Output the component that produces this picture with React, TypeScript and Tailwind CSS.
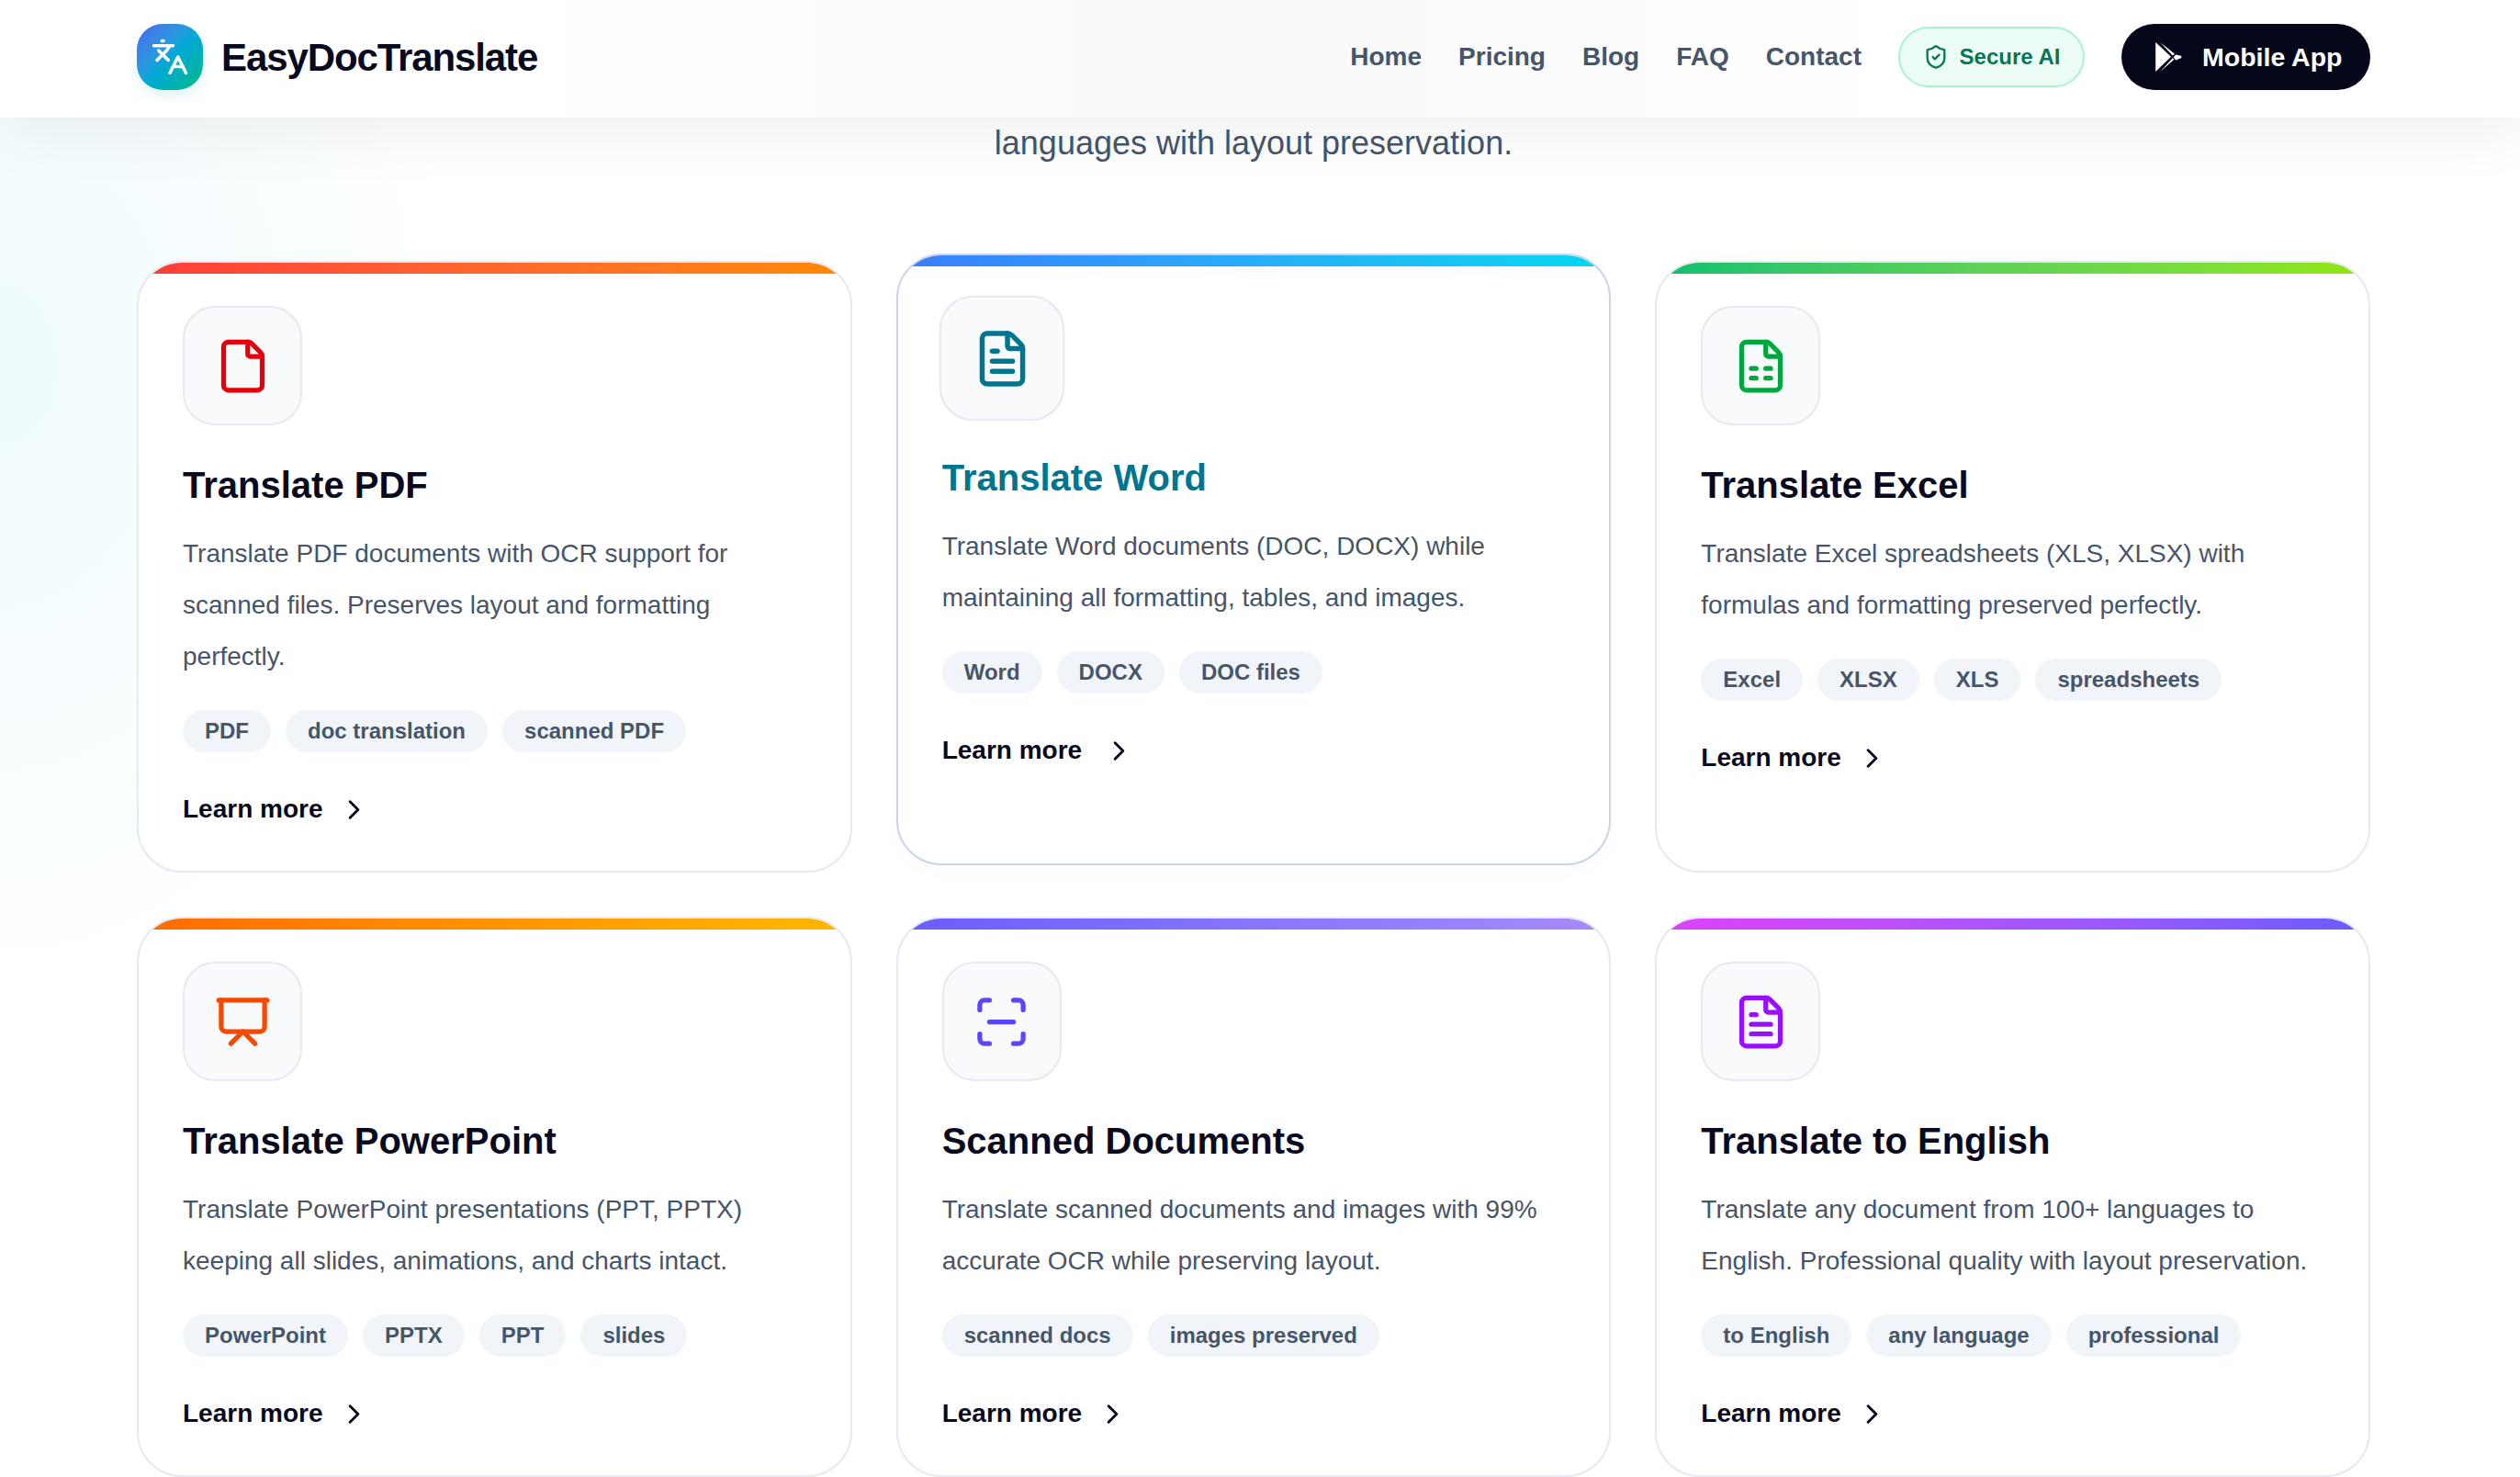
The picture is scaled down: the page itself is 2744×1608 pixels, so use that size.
import { ChevronRight, File, FileSpreadsheet, FileText, Languages, Presentation, ScanLine, ShieldCheck } from 'lucide-react'
import type { LucideIcon } from 'lucide-react'

type Card = {
  title: string
  desc: string
  tags: string[]
  Icon: LucideIcon
  iconColor: string
  bar: string
  active?: boolean
}

const CARDS: Card[] = [
  {
    title: 'Translate PDF',
    desc: 'Translate PDF documents with OCR support for scanned files. Preserves layout and formatting perfectly.',
    tags: ['PDF', 'doc translation', 'scanned PDF'],
    Icon: File,
    iconColor: 'text-[#e7000b]',
    bar: 'from-[#ff3b3b] to-[#ff8a00]',
  },
  {
    title: 'Translate Word',
    desc: 'Translate Word documents (DOC, DOCX) while maintaining all formatting, tables, and images.',
    tags: ['Word', 'DOCX', 'DOC files'],
    Icon: FileText,
    iconColor: 'text-[#00758f]',
    bar: 'from-[#3a7dff] to-[#00d8f0]',
    active: true,
  },
  {
    title: 'Translate Excel',
    desc: 'Translate Excel spreadsheets (XLS, XLSX) with formulas and formatting preserved perfectly.',
    tags: ['Excel', 'XLSX', 'XLS', 'spreadsheets'],
    Icon: FileSpreadsheet,
    iconColor: 'text-[#00a63e]',
    bar: 'from-[#00c070] to-[#92e600]',
  },
  {
    title: 'Translate PowerPoint',
    desc: 'Translate PowerPoint presentations (PPT, PPTX) keeping all slides, animations, and charts intact.',
    tags: ['PowerPoint', 'PPTX', 'PPT', 'slides'],
    Icon: Presentation,
    iconColor: 'text-[#f54900]',
    bar: 'from-[#ff6a00] to-[#ffb800]',
  },
  {
    title: 'Scanned Documents',
    desc: 'Translate scanned documents and images with 99% accurate OCR while preserving layout.',
    tags: ['scanned docs', 'images preserved'],
    Icon: ScanLine,
    iconColor: 'text-[#5b45ff]',
    bar: 'from-[#6a5cff] to-[#a78bfa]',
  },
  {
    title: 'Translate to English',
    desc: 'Translate any document from 100+ languages to English. Professional quality with layout preservation.',
    tags: ['to English', 'any language', 'professional'],
    Icon: FileText,
    iconColor: 'text-[#9810fa]',
    bar: 'from-[#e040fb] to-[#6a5cff]',
  },
]

const NAV = ['Home', 'Pricing', 'Blog', 'FAQ', 'Contact']

function PlayMark() {
  return (
    <svg width="29" height="32" viewBox="0 0 85 95" fill="#ffffff" aria-hidden="true">
      <path d="M0 0 L50 47 L0 95 Z" />
      <path d="M15 0 L62 38 L55 43 Z" />
      <path d="M15 95 L60 56 L55 51 Z" />
      <path d="M65 40 L82 44 Q86 47 82 51 L65 58 L58 48 Z" />
    </svg>
  )
}

function Header() {
  return (
    <header className="relative z-10 h-[128px] shrink-0 bg-gradient-to-r from-white from-[20%] via-[#f9f9f9] via-[50%] to-white to-[76%] pb-[4px] shadow-[0_10px_70px_rgba(0,0,0,0.08)]">
      <div className="ml-[149px] flex h-full w-[2432px] items-center justify-between">
        <div className="flex items-center gap-[20px]">
          <div className="flex h-[72px] w-[72px] items-center justify-center rounded-[28px] bg-gradient-to-br from-[#4a63f0] via-[#00a8d8] to-[#10b981] shadow-[0_6px_14px_rgba(0,160,180,0.12)]">
            <Languages size={42} strokeWidth={2} className="text-white" />
          </div>
          <span className="text-[42px] font-bold tracking-[-1.1px] text-[#0a0a1f]">EasyDocTranslate</span>
        </div>
        <nav className="flex items-center gap-[40px]">
          <div className="flex items-center gap-[40px]">
            {NAV.map((item) => (
              <a key={item} className="text-[28px] font-semibold text-[#475569]">
                {item}
              </a>
            ))}
          </div>
          <div className="flex h-[66px] w-[203px] items-center justify-center gap-[12px] rounded-full border-2 border-[#a7f3d0] bg-[#ecfdf5] text-[24px] font-semibold text-[#047857]">
            <ShieldCheck size={28} strokeWidth={2} />
            Secure AI
          </div>
          <div className="flex h-[72px] w-[271px] items-center gap-[22px] rounded-full bg-[#05071a] pl-[37px] text-[28.5px] font-semibold text-white">
            <PlayMark />
            Mobile App
          </div>
        </nav>
      </div>
    </header>
  )
}

function FeatureCard({ card }: { card: Card }) {
  const { Icon } = card
  return (
    <div
      className={`relative overflow-hidden rounded-[49px] border-2 bg-white px-[48px] pt-[47px] pb-[45px] ${
        card.active
          ? '-translate-y-[8px] border-[#c9d5ea] shadow-[0_6px_24px_rgba(15,23,42,0.02)]'
          : 'border-[#e6e8f2]'
      }`}
    >
      <div className={`absolute inset-x-0 top-0 h-[12px] bg-gradient-to-r ${card.bar}`} />
      <div
        className={`flex h-[130px] w-[130px] items-center justify-center rounded-[35px] border-2 border-[#e6e8f2] bg-[#f8fafc] ${
          card.active ? 'scale-105' : ''
        }`}
      >
        <Icon size={63} strokeWidth={2} className={card.iconColor} />
      </div>
      <h3 className={`mt-[40px] text-[40px] font-bold leading-[50px] ${card.active ? 'text-[#00758f]' : 'text-[#0a0a1f]'}`}>
        {card.title}
      </h3>
      <p className="mt-[22px] text-[28px] leading-[56px] text-[#475569]">{card.desc}</p>
      <div className="mt-[30px] flex flex-wrap gap-[16px]">
        {card.tags.map((tag) => (
          <span key={tag} className="flex h-[46px] items-center rounded-full bg-[#f1f5f9] px-[24px] text-[24px] font-semibold text-[#475569]">
            {tag}
          </span>
        ))}
      </div>
      <a className="mt-[40px] flex items-center gap-[16px] text-[28px] font-bold leading-[44px] text-[#0a0a1f]">
        Learn more
        <ChevronRight size={35} strokeWidth={2} className={card.active ? 'translate-x-[7px]' : ''} />
      </a>
    </div>
  )
}

export default function App() {
  return (
    <div className="flex h-screen flex-col overflow-hidden bg-[radial-gradient(ellipse_500px_700px_at_0px_400px,#effbfd,transparent)] font-['Liberation_Sans',sans-serif]">
      <Header />
      <main className="ml-[149px] w-[2432px]">
        <p className="pt-[8px] text-center text-[36px] leading-[40px] text-[#475569]">languages with layout preservation.</p>
        <div className="mt-[108px] grid grid-cols-3 gap-x-[48px] gap-y-[48px]">
          {CARDS.map((card) => (
            <FeatureCard key={card.title} card={card} />
          ))}
        </div>
      </main>
    </div>
  )
}
